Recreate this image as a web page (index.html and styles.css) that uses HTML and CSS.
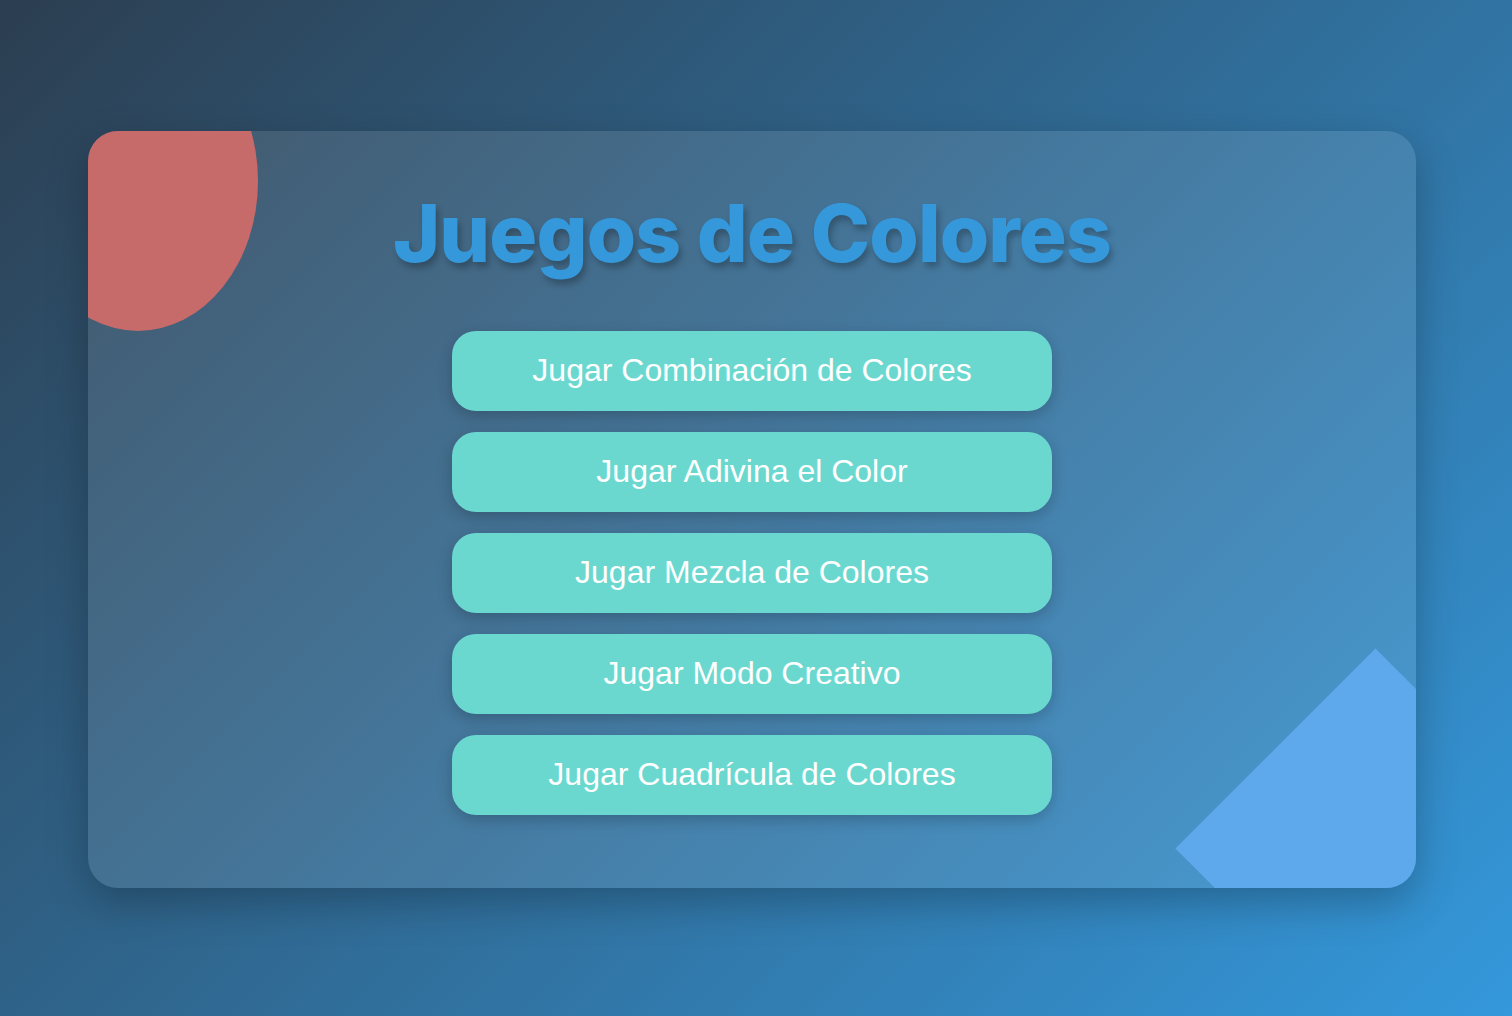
FILE: index.html
```html
<!DOCTYPE html>
<html lang="es">
<head>
<meta charset="utf-8">
<title>Juegos de Colores</title>
<link rel="stylesheet" href="styles.css">
</head>
<body>
<main class="card">
  <div class="shape shape-circle"></div>
  <div class="shape shape-diamond"></div>
  <h1 class="title">Juegos de Colores</h1>
  <nav class="menu">
    <button class="menu-btn">Jugar Combinación de Colores</button>
    <button class="menu-btn">Jugar Adivina el Color</button>
    <button class="menu-btn">Jugar Mezcla de Colores</button>
    <button class="menu-btn">Jugar Modo Creativo</button>
    <button class="menu-btn">Jugar Cuadrícula de Colores</button>
  </nav>
</main>
</body>
</html>
```
FILE: styles.css
```css
* { box-sizing: border-box; }
html, body { height: 100%; }
body {
  margin: 0;
  min-height: 100vh;
  background: linear-gradient(135deg, #2c3e50 0%, #3498db 100%);
  display: flex;
  align-items: center;
  justify-content: flex-start;
  padding: 2px 96px 0 88px;
  font-family: "Liberation Sans", Arial, sans-serif;
}
.card {
  position: relative;
  overflow: hidden;
  flex: 0 0 1328px;
  width: 1328px;
  height: 757px;
  border-radius: 30px;
  background: rgba(255, 255, 255, 0.1);
  box-shadow: 0 15px 40px rgba(0, 0, 0, 0.25);
  display: flex;
  flex-direction: column;
  align-items: center;
  padding-top: 53px;
}
.shape { position: absolute; }
.shape-circle {
  left: -70px;
  top: -100px;
  width: 240px;
  height: 300px;
  border-radius: 50%;
  background: #c66b6a;
}
.shape-diamond {
  width: 283px;
  height: 283px;
  right: -101px;
  bottom: -102px;
  background: #5ea8ec;
  transform: rotate(45deg);
}
.title {
  position: relative;
  margin: 0 0 50px;
  font-family: "Inter", sans-serif;
  font-weight: 800;
  font-size: 80px;
  letter-spacing: -0.9px;
  color: #3498db;
  text-shadow: 3px 5px 6px rgba(0, 0, 0, 0.25);
}
.menu {
  position: relative;
  display: flex;
  flex-direction: column;
  gap: 20.5px;
  width: 600px;
}
.menu-btn {
  height: 80.5px;
  border: none;
  border-radius: 24px;
  background: #6bd8d0;
  color: #ffffff;
  font-family: "Liberation Sans", Arial, sans-serif;
  font-size: 32px;
  box-shadow: 0 5px 15px rgba(0, 0, 0, 0.2);
  cursor: pointer;
}
```
